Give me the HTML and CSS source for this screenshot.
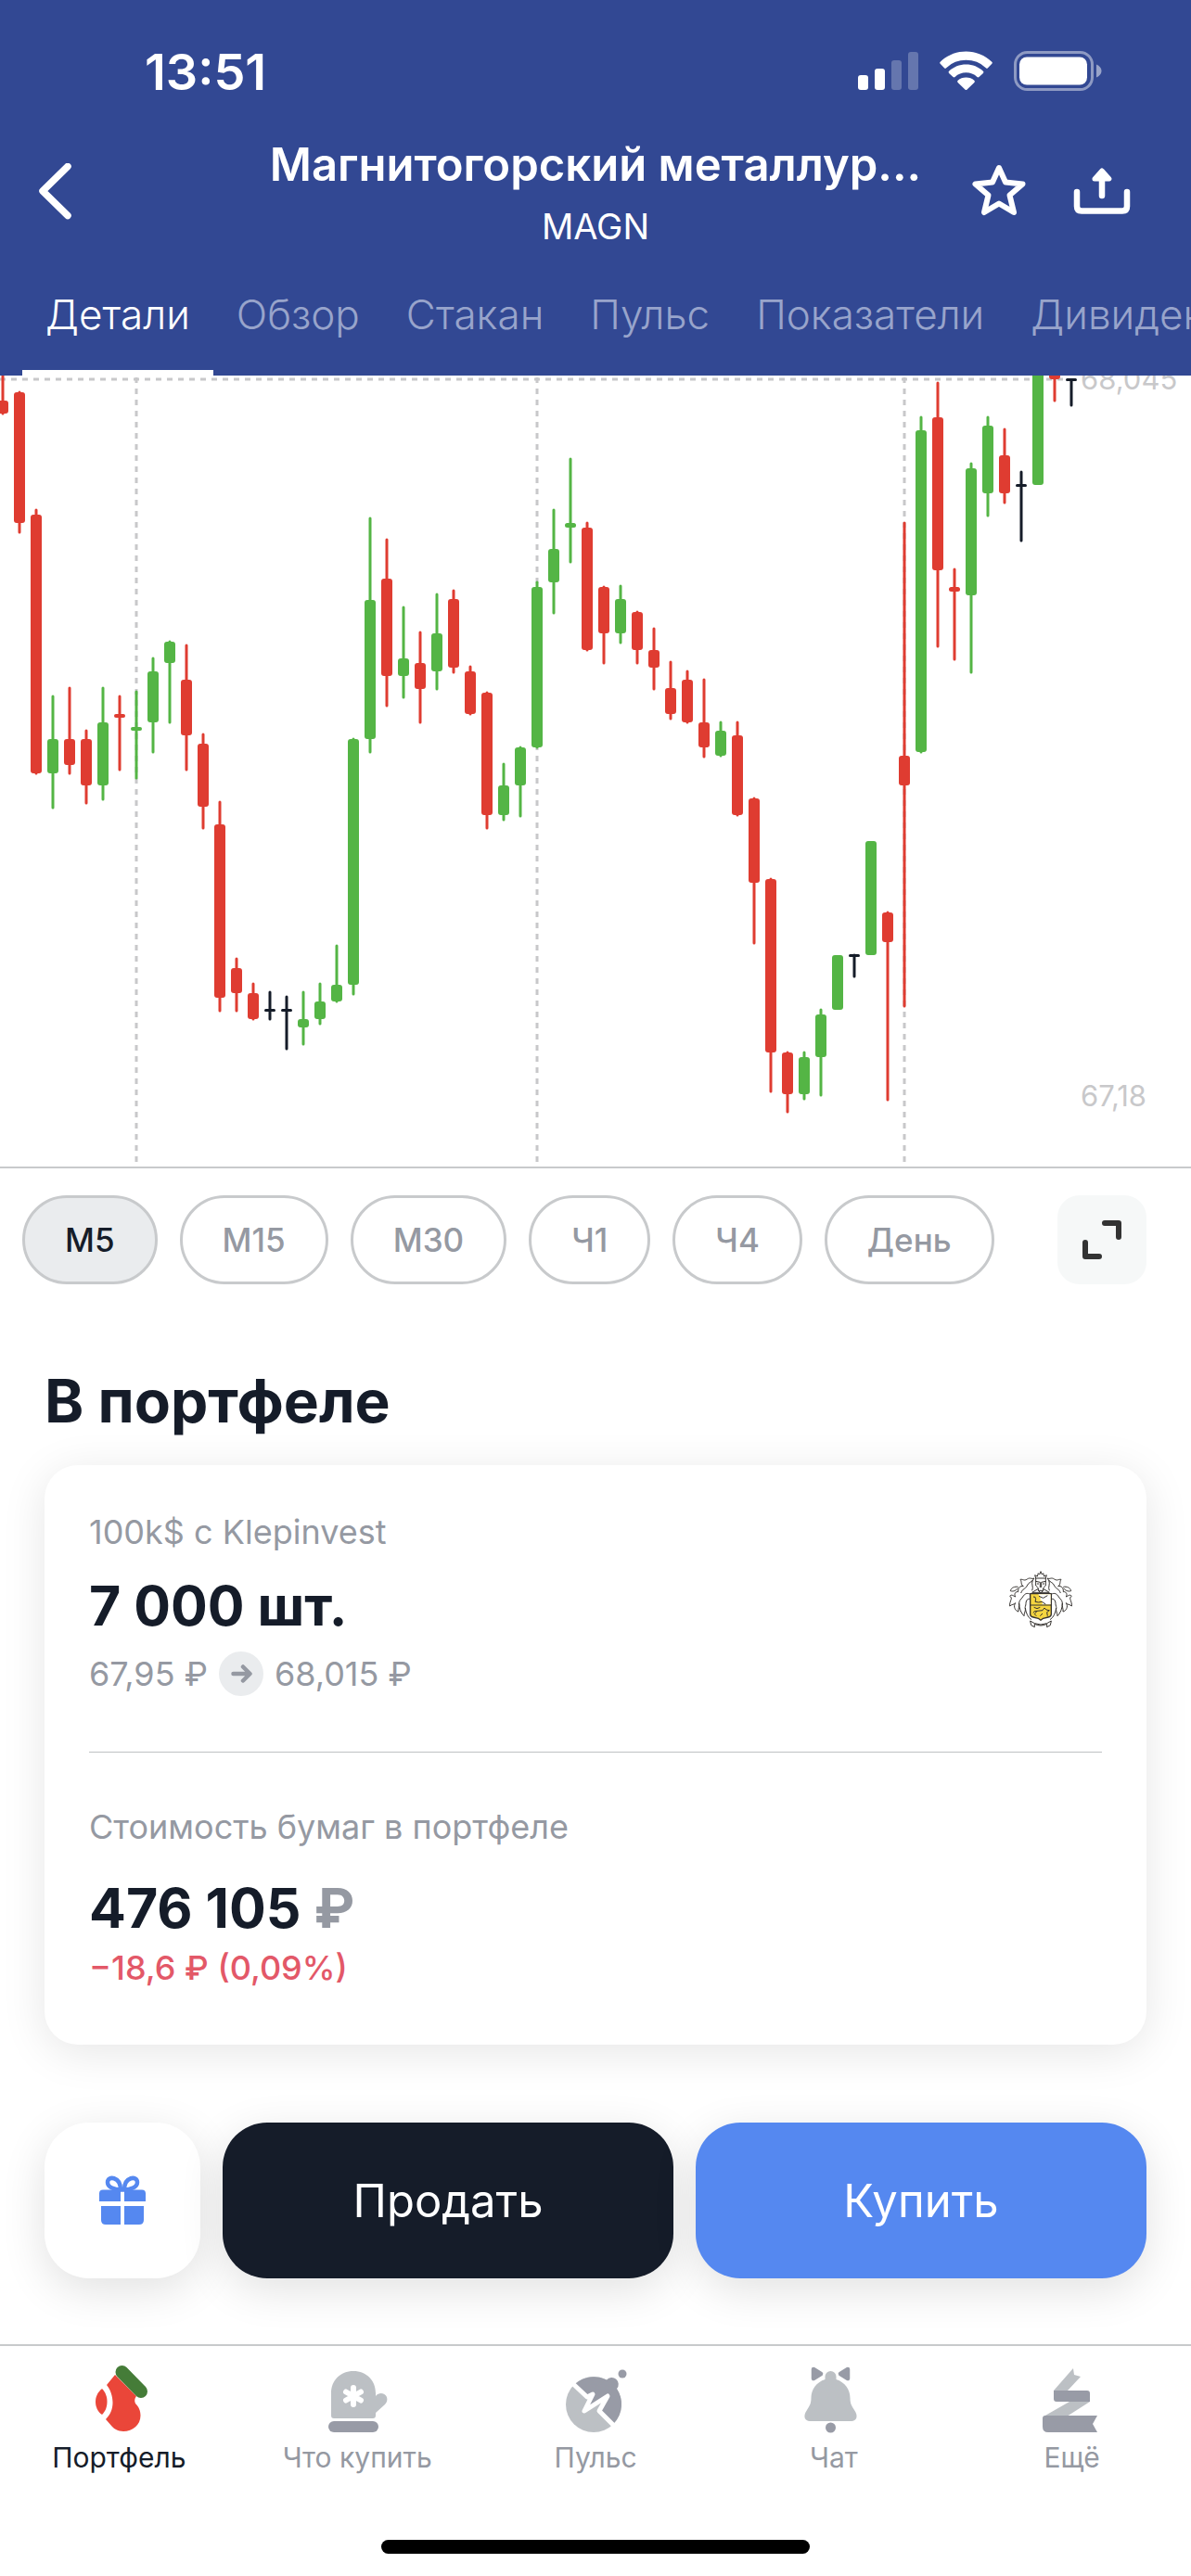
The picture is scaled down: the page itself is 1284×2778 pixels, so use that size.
FILE: index.html
```html
<!DOCTYPE html>
<html lang="ru">
<head>
<meta charset="utf-8">
<meta name="viewport" content="width=device-width">
<title>MAGN</title>
<link rel="stylesheet" href="styles.css">
</head>
<body>
<header class="header">
  <div class="status">
    <span class="status-time">13:51</span>
    <div class="status-icons">
      <svg width="65" height="43" viewBox="0 0 65 43" fill="#fff" aria-hidden="true"><rect y="26" width="11" height="16" rx="3"/><rect x="18" y="19" width="11" height="23" rx="3"/><rect x="36" y="10" width="11" height="32" rx="3" opacity=".25"/><rect x="54" y="1" width="11" height="41" rx="3" opacity=".25"/></svg>
      <svg width="57" height="43" viewBox="0 0 57 43" fill="#fff" aria-hidden="true"><path d="M28.500 0.500C39 .5 49 4.500 56.300 11.700a1.500 1.500 0 0 1 0 2.100L52 18.200a1.500 1.500 0 0 1-2.100 0A31 31 0 0 0 7.100 18.200a1.500 1.500 0 0 1-2.100 0L.7 13.800a1.500 1.500 0 0 1 0-2.100C8 4.500 18 .5 28.500.5Z"/><path d="M28.500 14.500c7 0 13.500 2.600 18.400 7.200a1.500 1.500 0 0 1 0 2.200L42.500 28a1.600 1.600 0 0 1-2.100 0 17.600 17.600 0 0 0-23.800 0 1.600 1.600 0 0 1-2.100 0l-4.400-4.100a1.500 1.500 0 0 1 0-2.200c4.900-4.600 11.400-7.200 18.400-7.200Z"/><path d="M28.500 28.500c3.400 0 6.500 1.200 8.800 3.200.7.600.7 1.500.1 2.200l-7.800 7.600a1.600 1.600 0 0 1-2.200 0l-7.800-7.600a1.500 1.500 0 0 1 .1-2.200c2.300-2 5.400-3.200 8.800-3.200Z"/></svg>
      <svg width="95" height="43" viewBox="0 0 95 43" aria-hidden="true"><rect x="1.500" y="1.500" width="83" height="40" rx="13" fill="none" stroke="#fff" stroke-opacity=".45" stroke-width="3"/><rect x="6" y="6.500" width="73" height="30" rx="8" fill="#fff"/><path d="M89 14.500c3.500 1.500 5.500 4 5.500 7s-2 5.500-5.500 7Z" fill="#fff" fill-opacity=".5"/></svg>
    </div>
  </div>
  <div class="titlebar">
    <button class="icon-button back" aria-label="Назад"><svg width="40" height="64" viewBox="0 2 40 64" fill="none" stroke="#fff" stroke-width="7.500" stroke-linecap="round" stroke-linejoin="round"><path d="M33 5.500 6 32l27 26.500"/></svg></button>
    <div class="titles">
      <h1 class="title">Магнитогорский металлур...</h1>
      <p class="ticker">MAGN</p>
    </div>
    <div class="actions">
      <button class="icon-button" aria-label="В избранное"><svg width="64" height="64" viewBox="0 4 64 64" fill="none" stroke="#fff" stroke-width="6" stroke-linejoin="round"><path d="M32 9 39 24.500 57.500 26.500 43.500 38.500 48 57 32 47.500 16 57 20.500 38.500 6.500 26.500 25 24.500Z"/></svg></button>
      <button class="icon-button" aria-label="Поделиться"><svg width="64" height="64" viewBox="0 3 64 64" fill="none" stroke="#fff" stroke-width="6.500" stroke-linecap="round" stroke-linejoin="round"><path d="M5 34v15.500q0 5 5 5h44q5 0 5-5V34"/><path d="M32 38V18"/><path d="M24 20 32 11 40 20Z" fill="#fff" stroke-width="5"/></svg></button>
    </div>
  </div>
  <nav class="tabs">
    <a class="tab tab-active" href="#details">Детали</a>
    <a class="tab" href="#overview">Обзор</a>
    <a class="tab" href="#book">Стакан</a>
    <a class="tab" href="#pulse">Пульс</a>
    <a class="tab" href="#stats">Показатели</a>
    <a class="tab" href="#dividends">Дивиденды</a>
  </nav>
</header>

<main>
  <svg class="chart" id="chart" viewBox="0 405 1284 853" role="img" aria-label="График цены MAGN">
    <g class="grid">
      <path d="M0 409H1152M147 407V1254M579 407V1254M975 407V1254"/>
    </g>
    <text class="price" x="1165" y="420">68,045</text>
    <text class="price" x="1165" y="1193">67,18</text>
    <g id="candles"></g>
  </svg>

  <div class="periods">
    <button class="period period-active">M5</button>
    <button class="period">M15</button>
    <button class="period">M30</button>
    <button class="period">Ч1</button>
    <button class="period">Ч4</button>
    <button class="period">День</button>
    <button class="expand" aria-label="На весь экран"><svg width="44" height="44" viewBox="0 0 44 44" fill="none" stroke="#333" stroke-width="6" stroke-linecap="round" stroke-linejoin="round"><path d="M25 4H40V19M4 25V40H19"/></svg></button>
  </div>

  <section class="portfolio">
    <h2 class="heading">В портфеле</h2>
    <div class="card">
      <div class="holding">
        <div>
          <p class="caption">100k$ с Klepinvest</p>
          <p class="amount">7 000 шт.</p>
          <p class="prices"><span>67,95 ₽</span>
            <svg width="48" height="48" viewBox="0 0 48 48" aria-hidden="true"><circle cx="24" cy="24" r="24" fill="#eaecee"/><path d="M15.500 24H33M26 16.500 33.500 24 26 31.500" fill="none" stroke="#9599a2" stroke-width="4.500" stroke-linecap="round" stroke-linejoin="round"/></svg>
            <span>68,015 ₽</span></p>
        </div>
        <svg class="emblem" width="72" height="66" viewBox="78 62 216 198" fill="none" stroke="#35322f" stroke-width="3" stroke-linejoin="round" aria-hidden="true">
          <path d="M167 82 170 92H202L205 82 197 86 194 76 190 80 186 70 182 80 178 76 175 86Z"/>
          <path d="M170 92V116L178 124V132H194V124L202 116V92M170 102 184 105V122M202 102 188 105V122M174 110H180M192 110H198"/>
          <path d="M178 126 158 138H214L194 126M178 132 186 140 194 132"/>
          <path d="M165 92C156 96 152 88 142 95 132 102 128 94 120 96 126 104 120 112 130 118 120 116 112 122 113 136 106 134 98 142 104 152 98 150 92 142 86 150 98 156 84 166 86 182 92 176 100 178 104 172 96 184 104 198 114 200 112 192 118 184 116 172 116 190 122 204 132 214 132 204 138 198 136 188 138 204 144 218 156 226"/>
          <path d="M152 144C142 138 134 142 128 152 122 162 118 160 116 172M152 160C144 156 138 164 138 174 138 182 134 184 136 190M165 92C158 106 146 104 142 116 136 128 128 124 122 140M88 133C90 122 102 118 113 120M88 133C98 136 106 132 112 124M160 98C154 112 164 120 158 132"/>
          <path d="M207 92C216 96 220 88 230 95 240 102 244 94 252 96 246 104 252 112 242 118 252 116 260 122 259 136 266 134 274 142 268 152 274 150 280 142 286 150 274 156 288 166 286 182 280 176 272 178 268 172 276 184 268 198 258 200 260 192 254 184 256 172 256 190 250 204 240 214 240 204 234 198 236 188 234 204 228 218 216 226"/>
          <path d="M220 144C230 138 238 142 244 152 250 162 254 160 256 172M220 160C228 156 234 164 234 174 234 182 238 184 236 190M207 92C214 106 226 104 230 116 236 128 244 124 250 140M284 133C282 122 270 118 259 120M284 133C274 136 266 132 260 124M212 98C218 112 208 120 214 132"/>
          <path d="M152 142H220V208Q220 216 210 218L194 222 186 228 178 222 162 218Q152 216 152 208Z" fill="#f5d540" stroke-width="4"/>
          <path d="M178 144H218V177H190Q196 168 184 162 188 154 178 144Z" fill="#fff" stroke="none"/>
          <path d="M152 179H220M162 152Q170 150 170 160L168 168Q178 172 190 168L202 176M180 150 194 156 208 148M162 204Q164 196 174 198L192 196 198 188 204 194 214 196 206 202 208 214M174 198 166 208 172 214M192 206 184 214M164 186 174 190 184 186" />
          <path d="M152 230 166 238Q186 246 206 238L220 230 217 244 206 250V240Q186 250 166 240V250L155 244Z" fill="#fff"/>
        </svg>
      </div>
      <hr class="divider">
      <p class="caption">Стоимость бумаг в портфеле</p>
      <p class="amount amount-total">476 105 <span class="currency">₽</span></p>
      <p class="change">−18,6 ₽ (0,09%)</p>
    </div>
  </section>

  <div class="trade">
    <button class="trade-button gift" aria-label="Подарить"><svg width="52" height="54" viewBox="0 0 52 54" fill="#5588f0"><path d="M5 15.500H24V28H1V19.500Q1 15.500 5 15.500ZM28 15.500H47Q51 15.500 51 19.500V28H28ZM3 33H24V53H8Q3 53 3 48ZM28 33H49V48Q49 53 44 53H28Z"/><path d="M24 15.500C18 15.500 10 13 10 7.500 10 0 24 1 24 15.500ZM28 15.500C34 15.500 42 13 42 7.500 42 0 28 1 28 15.500Z" fill="none" stroke="#5588f0" stroke-width="4.500"/></svg></button>
    <button class="trade-button sell">Продать</button>
    <button class="trade-button buy">Купить</button>
  </div>
</main>

<nav class="bottom-nav">
  <a class="nav-item nav-active" href="#portfolio"><svg viewBox="0 0 80 80" width="80" height="80" aria-hidden="true"><path d="M36 15 59 38Q56 42 58 46C62 50 63.500 54 63.500 59 63.500 69 55 76 45 76 39 76 35 73 33 71L26 63C31 58 33.500 52 33.500 45 33.500 38 31 31 27 26Z" fill="#ea4639"/><path d="M22 30C17 34 15 39 15 44S17 55 22 58C26 54 27.500 49 27.500 44S26 34 22 30Z" fill="#ea4639"/><path d="M43.500 12 64 33" stroke="#457c38" stroke-width="14" stroke-linecap="round"/></svg>Портфель</a>
  <a class="nav-item" href="#buy"><svg viewBox="0 0 80 80" width="80" height="80" aria-hidden="true"><path d="M12 35C12 21 22 11 36 11S60 21 60 35V38C64 33 70 35 72 39 73 42 72 45 70 47L60 56V59Q60 62 57 62H15Q12 62 12 59Z" fill="#bcc0c4"/><path d="M36 29V47M28 33.500 44 42.500M44 33.500 28 42.500" stroke="#fff" stroke-width="6" stroke-linecap="round"/><rect x="9" y="65" width="54" height="12" rx="6" fill="#989ba6"/></svg>Что купить</a>
  <a class="nav-item" href="#feed"><svg viewBox="0 0 80 80" width="80" height="80" aria-hidden="true"><circle cx="38" cy="47" r="30" fill="#bcc0c4"/><path d="M18 25A30 30 0 0 1 52 20.500 7 7 0 0 1 63 30 30 30 0 0 1 60 67L44 53 53 38 30 54 37 37 30 38Z" fill="#989ba6"/><circle cx="69" cy="14" r="4.500" fill="#989ba6"/><path d="M15 24 31 39 37 36 28 54 53 38 44 54 62 72" fill="none" stroke="#fff" stroke-width="5" stroke-linecap="round" stroke-linejoin="round"/></svg>Пульс</a>
  <a class="nav-item" href="#chat"><svg viewBox="0 0 80 80" width="80" height="80" aria-hidden="true"><path d="M30.500 20V17A6 6 0 0 1 42.500 17V20C52 23 57.500 31 57.500 40 57.500 46 59 48 62 53 67 60 64 65 59 65H14C9 65 6 60 11 53 14 48 15.500 46 15.500 40 15.500 31 21 23 30.500 20Z" fill="#bcc0c4"/><path d="M18 9 26 14 18 19ZM55 9 47 14 55 19Z" fill="#989ba6" stroke="#989ba6" stroke-width="4.500" stroke-linejoin="round"/><circle cx="36.500" cy="72" r="5.500" fill="#989ba6"/></svg>Чат</a>
  <a class="nav-item" href="#more"><svg viewBox="0 0 80 80" width="80" height="80" aria-hidden="true"><path d="M20 32 41 8 42 15 49 17 35 32ZM9 60 37 44H59L34 60Z" fill="#bcc0c4"/><path d="M20 32H56Q59 32 59 35V44H23Q20 44 20 41ZM11 59H67L62 68 67 77H14Q8 77 8 71V62Q8 59 11 59Z" fill="#989ba6"/></svg>Ещё</a>
</nav>
<div class="home-indicator"></div>
<script src="chart.js"></script>
</body>
</html>
```

FILE: styles.css
```css
* { box-sizing: border-box; margin: 0; padding: 0; }

body {
  background: #fff;
  color: #151c29;
  font-family: Inter, "Liberation Sans", sans-serif;
  overflow-x: hidden;
}

button { border: 0; background: none; font: inherit; color: inherit; }
a { color: inherit; text-decoration: none; }
svg { display: block; flex: none; }

.header { background: #324893; color: #fff; }

.status {
  display: flex;
  justify-content: space-between;
  align-items: center;
  padding: 46px 96px 0 156px;
}
.status-time { font-size: 54px; line-height: 64px; font-weight: 600; }
.status-icons { display: flex; gap: 23px; padding-bottom: 4px; }

.titlebar {
  display: grid;
  grid-template-columns: 1fr auto 1fr;
  align-items: center;
  padding: 38px 64px 0 40px;
}
.icon-button { display: block; }
.back { justify-self: start; }
.titles { text-align: center; grid-column: 2; margin-left: 24px; }
.title { font-size: 49px; line-height: 60px; font-weight: 600; white-space: nowrap; }
.ticker { margin-top: 12px; font-size: 38px; line-height: 48px; }
.actions { display: flex; gap: 47px; justify-self: end; }

.tabs { display: flex; padding-left: 24px; overflow: hidden; }
.tab {
  flex: none;
  padding: 43px 25px 32px;
  border-bottom: 6px solid transparent;
  font-size: 44px;
  line-height: 56px;
  font-weight: 300;
  color: #98a4cb;
}
.tab-active { color: #fff; border-color: #fff; }

.chart { width: 100%; height: auto; border-bottom: 2px solid #c8cacc; }
.grid path { stroke: #c8c8ca; stroke-width: 3; stroke-dasharray: 6 6; }
.price { font-size: 31px; fill: #c8c8ca; }
.up { stroke: #54b545; fill: #54b545; }
.down { stroke: #df3c31; fill: #df3c31; }
.flat { stroke: #151c29; fill: #151c29; }
.wick { stroke-width: 3; stroke-linecap: round; }
.body { stroke: none; }

.periods { display: flex; gap: 24px; padding: 29px 48px 0 24px; }
.period {
  height: 96px;
  padding: 0 43px;
  border: 3px solid #c8cacc;
  border-radius: 48px;
  font-size: 35px;
  font-weight: 500;
  color: #9599a2;
}
.period-active { background: #eaecee; color: #151c29; }
.expand {
  display: flex;
  align-items: center;
  justify-content: center;
  width: 96px;
  margin-left: auto;
  border-radius: 24px;
  background: #f6f8f8;
}

.portfolio { padding: 88px 48px 0; }
.heading { font-size: 64px; line-height: 76px; font-weight: 700; }
.card {
  margin-top: 31px;
  padding: 48px 48px 59px;
  border-radius: 36px;
  background: #fff;
  box-shadow: 0 8px 48px rgba(0, 0, 0, 0.1);
}
.holding { display: flex; justify-content: space-between; }
.emblem { margin: 64px 30px 0 0; }
.caption, .prices { font-size: 36px; line-height: 48px; color: #9599a2; }
.amount { margin-top: 20px; font-size: 59px; line-height: 72px; font-weight: 700; }
.prices { display: flex; gap: 12px; margin-top: 13px; }
.divider { margin: 60px 0 56px; border: 0; border-top: 1px solid #bfc1c3; }
.amount-total { margin-top: 28px; }
.currency { color: #9599a2; }
.change { margin-top: 4px; font-size: 36px; line-height: 48px; font-weight: 500; color: #e35868; }

.trade {
  display: grid;
  grid-template-columns: 168px 1fr 1fr;
  gap: 24px;
  padding: 84px 48px 71px;
}
.trade-button {
  display: flex;
  align-items: center;
  justify-content: center;
  height: 168px;
  border-radius: 48px;
  font-size: 49px;
  color: #fff;
  box-shadow: 0 12px 48px rgba(0, 0, 0, 0.12);
}
.gift { background: #fff; }
.sell { background: #151c29; }
.buy { background: #5588f0; }

.bottom-nav {
  display: grid;
  grid-template-columns: repeat(5, 1fr);
  padding-top: 16px;
  border-top: 2px solid #c8cacc;
  background: #fff;
}
.nav-item {
  display: flex;
  flex-direction: column;
  align-items: center;
  gap: 6px;
  font-size: 30px;
  line-height: 36px;
  color: #9599a2;
}
.nav-active { color: #151c29; }

.home-indicator {
  width: 36%;
  height: 15px;
  margin: 71px auto 24px;
  border-radius: 8px;
  background: #000;
}
```

FILE: chart.js
```js
// Each candle: [high, body top, body bottom, low, direction]; one every 18 units.
const candles = [
  [395,432,446,446,'down'],[423,423,564,574,'down'],[550,555,834,834,'down'],[751,797,834,871,'up'],
  [742,797,825,834,'down'],[788,797,847,866,'down'],[742,779,847,862,'up'],[751,770,774,830,'down'],
  [746,784,788,839,'up'],[710,724,779,811,'up'],[692,692,715,779,'up'],[696,733,793,830,'down'],
  [792,802,870,893,'down'],[865,889,1076,1090,'down'],[1034,1044,1071,1090,'down'],[1061,1071,1099,1099,'down'],
  [1070,1088,1091,1099,'flat'],[1075,1088,1091,1131,'flat'],[1070,1099,1108,1126,'up'],[1061,1080,1099,1104,'up'],
  [1020,1062,1080,1080,'up'],[797,797,1062,1072,'up'],[559,647,797,811,'up'],[582,624,729,761,'down'],
  [655,710,729,752,'up'],[682,715,743,779,'down'],[641,683,724,743,'up'],[637,646,720,725,'down'],
  [719,724,770,770,'down'],[747,747,879,893,'down'],[824,847,879,884,'up'],[806,806,847,880,'up'],
  [628,633,806,806,'up'],[550,592,628,661,'up'],[495,564,569,606,'up'],[564,569,701,701,'down'],
  [633,633,683,715,'down'],[632,646,683,693,'up'],[660,660,701,715,'down'],[678,701,720,743,'down'],
  [714,742,770,775,'down'],[724,733,779,779,'down'],[733,779,806,816,'down'],[779,788,815,815,'up'],
  [779,793,879,879,'down'],[861,861,952,1017,'down'],[948,948,1135,1177,'down'],[1135,1135,1180,1199,'down'],
  [1135,1140,1180,1185,'up'],[1089,1094,1140,1181,'up'],[1030,1030,1089,1089,'up'],[1030,1029,1032,1053,'flat'],
  [907,907,1030,1030,'up'],[984,984,1016,1186,'down'],[564,815,847,1085,'down'],[450,464,811,811,'up'],
  [413,450,615,697,'down'],[614,633,638,711,'down'],[500,505,642,725,'up'],[450,459,532,556,'up'],
  [463,491,532,542,'down'],[509,522,525,583,'flat'],[390,390,523,523,'up'],[390,390,409,432,'down'],
  [410,408,411,437,'flat']
];

document.getElementById('candles').innerHTML = candles.map(([high, top, bottom, low, dir], i) => {
  const x = 3 + 18 * i;
  const wick = low - high > bottom - top
    ? `<path class="wick" d="M${x} ${high}V${low}"/>` : '';
  const rx = Math.min(3, (bottom - top) / 2);
  return `<g class="${dir}">${wick}<rect class="body" x="${x - 6}" y="${top}" width="12" height="${bottom - top}" rx="${rx}"/></g>`;
}).join('');
```
